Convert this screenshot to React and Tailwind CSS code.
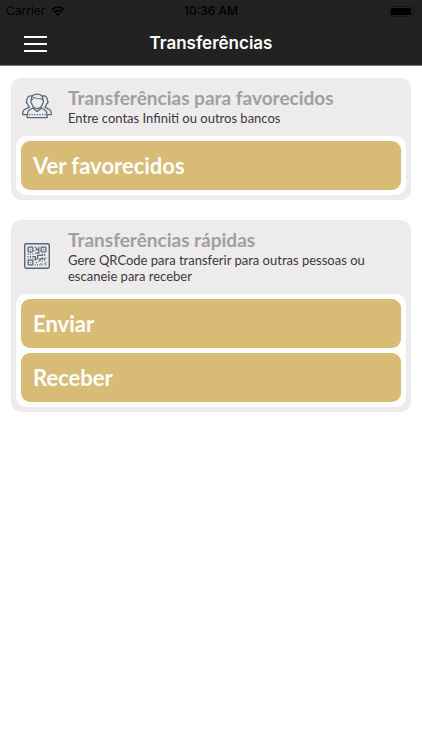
import { useState } from 'react'

function PeopleIcon() {
  return (
    <svg className="w-[31px] h-[26px]" viewBox="0 0 93 78" fill="none" stroke="#566779" strokeWidth="4" strokeLinecap="round" strokeLinejoin="round" aria-hidden="true">
      {/* side figures */}
      <path d="M29 8C21 6 15 13 15 22C13 25 14 30 17 32C18 37 20 40 23 43L9 49C3 52 2 58 2 66H14" />
      <path d="M65 8C73 6 79 13 79 22C81 25 80 30 77 32C76 37 74 40 71 43L84 49C90 52 91 58 91 66H80" />
      {/* centre figure */}
      <path d="M29 22C28 9 35 2 47 2C59 2 66 9 65 22C68 24 67 29 64 31C62 40 55 47 47 47C39 47 32 40 30 31C27 29 26 24 29 22Z" />
      <path d="M32 20C34 18 36 15 37 12C44 17 53 17 60 16L62 20" strokeWidth="3" />
      <path d="M34 45L22 52C16 56 16 63 16 75H78C78 63 78 56 72 52L60 45" />
      <path d="M35 47L47 56L59 47" />
      <path d="M23 66H73" strokeDasharray="1 7" />
    </svg>
  )
}

const qrModules = [
  [9, 3], [12, 3], [12, 4], [9, 6], [3, 9], [5, 9], [7, 9], [17, 9],
  [3, 11], [5, 11], [17, 10], [18, 12], [3, 13], [7, 13], [5, 12],
  [17, 14], [12, 15], [15, 15], [18, 16], [10, 16], [14, 17],
  [17, 17], [9, 18], [11, 18], [13, 18], [15, 18], [18, 18],
]

function QrCodeIcon() {
  return (
    <svg className="w-[26px] h-[26px]" viewBox="0 0 22 22" fill="none" stroke="#566779" aria-hidden="true">
      <rect x="0.6" y="0.6" width="20.8" height="20.8" rx="1.2" strokeWidth="1.2" />
      <rect x="3.5" y="3.5" width="4" height="4" rx="0.5" strokeWidth="1.1" />
      <rect x="14.5" y="3.5" width="4" height="4" rx="0.5" strokeWidth="1.1" />
      <rect x="3.5" y="14.5" width="4" height="4" rx="0.5" strokeWidth="1.1" />
      {/* joined modules in the middle */}
      <path d="M10.5 3.5V5.5H12.5V8.5H9.5M7 11.5H9.5V13.5H11.5V10.5H15.5V9M9.5 13.5V15M13.5 15.5V13.5H15.5V12M15.5 13.5H18" strokeWidth="1.1" />
      <g fill="#566779" stroke="none">
        <rect x="5" y="5" width="1" height="1" />
        <rect x="16" y="5" width="1" height="1" />
        <rect x="5" y="16" width="1" height="1" />
        {qrModules.map(([x, y]) => (
          <rect key={`${x}-${y}`} x={x} y={y} width="1" height="1" />
        ))}
      </g>
    </svg>
  )
}

function StatusBar() {
  return (
    <div className="grid grid-cols-[1fr_auto_1fr] items-center h-[22px] px-1.5 text-xs text-black">
      <div className="flex items-center gap-1.5">
        <span>Carrier</span>
        <svg className="w-[14px] h-[10px]" viewBox="0 0 14 10" fill="none" stroke="currentColor" strokeWidth="1.8" aria-hidden="true">
          <path d="M0.8 3.8C4.3 0.3 9.7 0.3 13.2 3.8" />
          <path d="M3.1 6.1C5.3 4 8.7 4 10.9 6.1" />
          <path d="M7 10L4.8 7.7C6.1 6.6 7.9 6.6 9.2 7.7Z" fill="currentColor" stroke="none" />
        </svg>
      </div>
      <span className="font-medium">10:36 AM</span>
      <svg className="justify-self-end w-[27px] h-[11px]" viewBox="0 0 27 11" aria-hidden="true">
        <rect x="0.5" y="0.5" width="23" height="10" rx="2.5" fill="none" stroke="#161616" />
        <rect x="2" y="2" width="20" height="7" rx="1" fill="#000" />
        <path d="M25 3.5C26.5 4.2 26.5 6.8 25 7.5Z" fill="#161616" />
      </svg>
    </div>
  )
}

function Card({ icon, title, description, actions }) {
  return (
    <section className="rounded-[10px] bg-[#eeebec] px-[5px] pb-[5px]">
      <div className="flex items-center gap-4 pt-2 pb-2.5 pl-1.5 pr-4">
        <div className="flex justify-center shrink-0 w-[30px]">{icon}</div>
        <div>
          <h2 className="text-[19px] leading-6 font-bold text-[#a09fa0]">{title}</h2>
          <p className="text-[13px] leading-4 text-[#3a3a3a]">{description}</p>
        </div>
      </div>
      <div className="flex flex-col gap-[5px] rounded-[10px] bg-white p-[5px]">
        {actions.map((label) => (
          <button
            key={label}
            type="button"
            className="h-[49px] rounded-[9px] bg-[#d8bb75] px-3 text-left text-[22px] font-bold text-white"
          >
            {label}
          </button>
        ))}
      </div>
    </section>
  )
}

function App() {
  const [menuOpen, setMenuOpen] = useState(false)

  return (
    <div className="min-h-screen bg-white font-['Lato',sans-serif]">
      <header className="bg-[#222222] border-b border-[#777777] font-['Inter',sans-serif]">
        <StatusBar />
        <div className="grid grid-cols-[1fr_auto_1fr] items-center h-[43px] px-6">
          <button
            type="button"
            aria-label="Menu"
            aria-expanded={menuOpen}
            onClick={() => setMenuOpen(!menuOpen)}
            className="flex flex-col gap-[5px] w-[23px]"
          >
            <span className="h-0.5 w-full bg-white"></span>
            <span className="h-0.5 w-full bg-white"></span>
            <span className="h-0.5 w-full bg-white"></span>
          </button>
          <h1 className="text-[17px] font-semibold text-white">Transferências</h1>
        </div>
      </header>

      <main className="flex flex-col gap-5 px-[11px] pt-3">
        <Card
          icon={<PeopleIcon />}
          title="Transferências para favorecidos"
          description="Entre contas Infiniti ou outros bancos"
          actions={['Ver favorecidos']}
        />
        <Card
          icon={<QrCodeIcon />}
          title="Transferências rápidas"
          description="Gere QRCode para transferir para outras pessoas ou escaneie para receber"
          actions={['Enviar', 'Receber']}
        />
      </main>
    </div>
  )
}

export default App
